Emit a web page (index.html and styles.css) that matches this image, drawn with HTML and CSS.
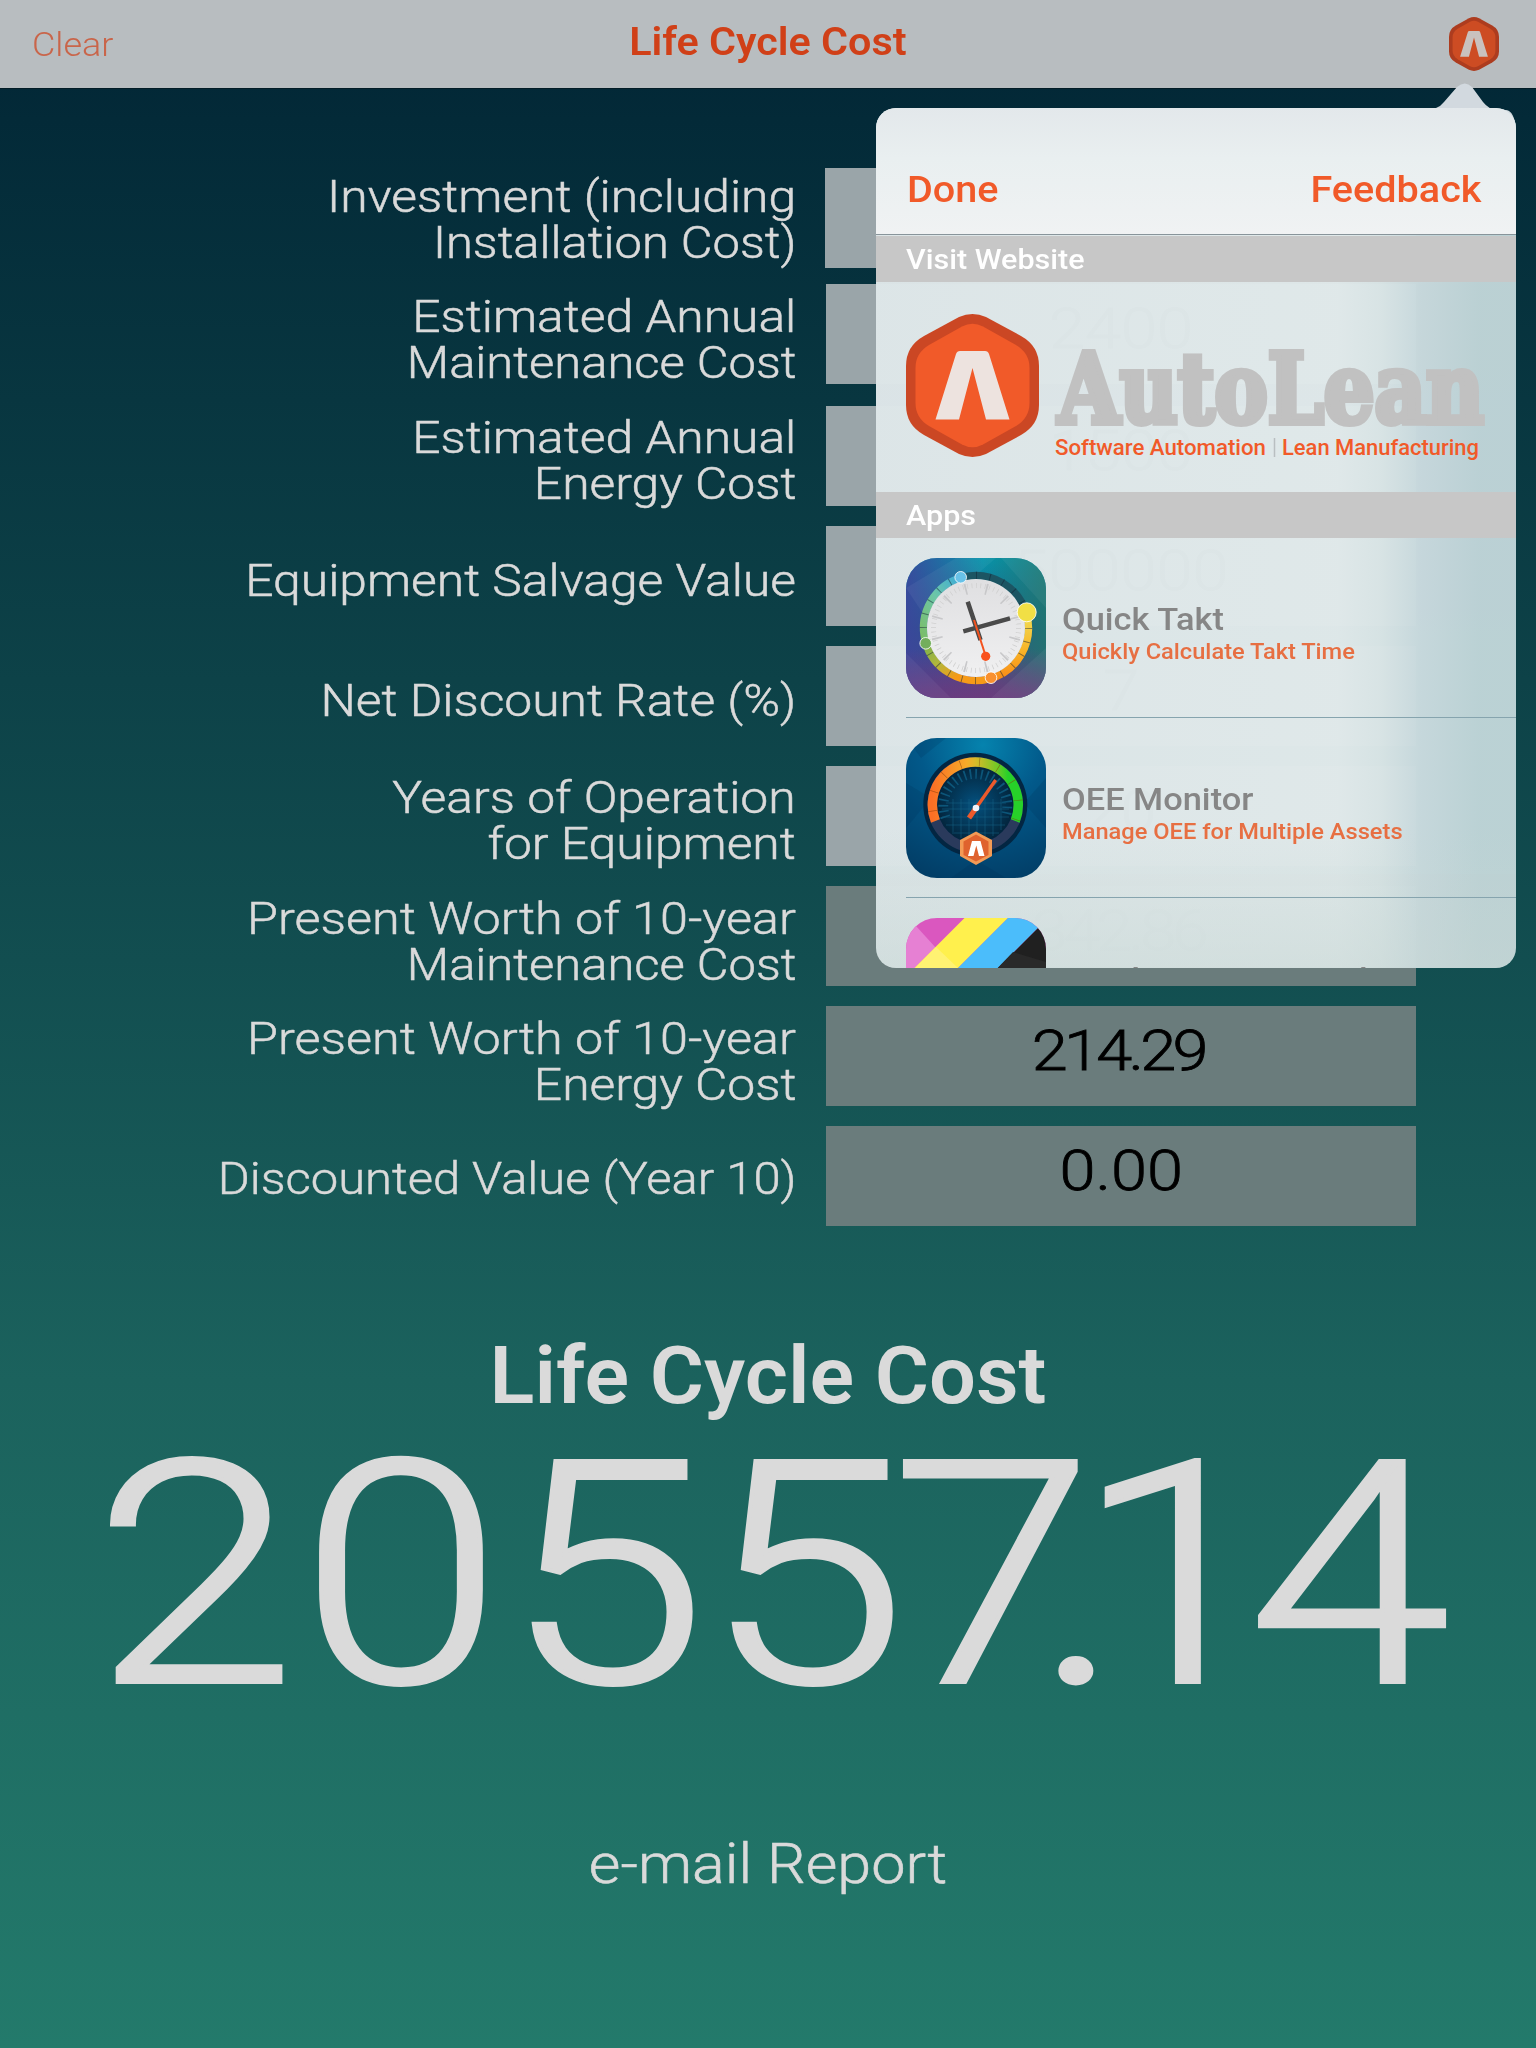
FILE: index.html
```html
<!DOCTYPE html>
<html lang="en">
<head>
<meta charset="utf-8">
<title>Life Cycle Cost</title>
<link rel="stylesheet" href="styles.css">
</head>
<body>
<svg class="defs" width="0" height="0" aria-hidden="true">
  <symbol id="badge" viewBox="0 0 133 143">
    <path class="badge-rim" d="M53 3Q66.500-3 80 3L115 22Q133 32 133 52V91Q133 111 115 121L80 140Q66.500 146 53 140L18 121Q0 111 0 91V52Q0 32 18 22Z"/>
    <path class="badge-face" d="M56 12.500Q66.500 7 77 12.500L110 31Q123.500 39 123.500 54V89Q123.500 104 110 112L77 130.500Q66.500 136 56 130.500L23 112Q9.500 104 9.500 89V54Q9.500 39 23 31Z"/>
    <path class="badge-mark" d="M54 37H79Q82 37 83 40L103.500 105.500H80L66.500 54L53 105.500H29.500L50 40Q51 37 54 37Z"/>
  </symbol>
</svg>

<div class="app">
  <header class="topbar">
    <a class="clear">Clear</a>
    <h1 class="title">Life Cycle Cost</h1>
    <svg class="menu-badge"><use href="#badge"/></svg>
  </header>

  <main class="content">
    <section class="form">
      <div class="row first"><p class="label"><span>Investment (including</span><span class="tight">Installation Cost)</span></p><div class="field"></div></div>
      <div class="row second"><p class="label"><span>Estimated Annual</span><span class="tight">Maintenance Cost</span></p><div class="field"><span>2400</span></div></div>
      <div class="row"><p class="label"><span>Estimated Annual</span><span>Energy Cost</span></p><div class="field"><span>1500</span></div></div>
      <div class="row"><p class="label"><span>Equipment Salvage Value</span></p><div class="field"><span>500000</span></div></div>
      <div class="row"><p class="label"><span>Net Discount Rate (%)</span></p><div class="field"><span>7</span></div></div>
      <div class="row"><p class="label"><span>Years of Operation</span><span>for Equipment</span></p><div class="field"><span>20</span></div></div>
      <div class="row result"><p class="label"><span class="loose">Present Worth of 10-year</span><span class="tight">Maintenance Cost</span></p><div class="field"><span class="narrow">342.86</span></div></div>
      <div class="row result"><p class="label"><span class="loose">Present Worth of 10-year</span><span>Energy Cost</span></p><div class="field"><span class="narrow">214.29</span></div></div>
      <div class="row result last"><p class="label"><span class="tight">Discounted Value (Year 10)</span></p><div class="field"><span>0.00</span></div></div>
    </section>
    <h2 class="total-title">Life Cycle Cost</h2>
    <svg class="total" viewBox="0 0 1536 312"><text transform="scale(1.17 1)" x="80 256.500 431 602 762 884.500 919 1067" y="256">20557.14</text></svg>
    <a class="email">e-mail Report</a>
  </main>

  <aside class="popover">
    <svg class="arrow" viewBox="0 0 96 60"><path d="M4 28Q18 28 24 20L37 5Q45-2 52 5L63 20Q69 27.500 76 27.500L86 28Q95 29 96 50V60H70L60 28Z"/></svg>
    <div class="panel">
      <div class="panel-bar"><a class="done">Done</a><a class="feedback">Feedback</a></div>
      <h3 class="section"><span>Visit Website</span></h3>
      <div class="brand">
        <svg class="brand-badge"><use href="#badge"/></svg>
        <svg class="wordmark" viewBox="0 0 434 122">
          <text class="word" x="3" y="87" textLength="426" lengthAdjust="spacingAndGlyphs">AutoLean</text>
          <text class="tag" x="0" y="119" textLength="211" lengthAdjust="spacingAndGlyphs">Software Automation</text>
          <path class="tag-rule" d="M219.500 102V121"/>
          <text class="tag" x="227" y="119" textLength="197" lengthAdjust="spacingAndGlyphs">Lean Manufacturing</text>
        </svg>
      </div>
      <h3 class="section apps"><span>Apps</span></h3>
      <ul class="apps-list">
        <li class="app-row">
          <svg class="icon" viewBox="0 0 140 140">
            <defs>
              <linearGradient id="tb" x1="0" y1="0" x2="0" y2="1"><stop offset="0" stop-color="#0794ab"/><stop offset=".5" stop-color="#205d88"/><stop offset="1" stop-color="#64417f"/></linearGradient>
              <linearGradient id="tl" x1="0" y1="0" x2="1" y2="0"><stop offset="0" stop-color="#3c459c" stop-opacity=".9"/><stop offset=".55" stop-color="#3c459c" stop-opacity="0"/></linearGradient>
              <linearGradient id="tr" x1="0" y1="0" x2="1" y2="0"><stop offset=".55" stop-color="#20766e" stop-opacity="0"/><stop offset="1" stop-color="#20766e" stop-opacity=".85"/></linearGradient>
              <linearGradient id="tp" x1="0" y1="0" x2="0" y2="1"><stop offset=".65" stop-color="#6b3a7d" stop-opacity="0"/><stop offset="1" stop-color="#6b3a7d" stop-opacity=".85"/></linearGradient>
              <linearGradient id="r1" x1="0" y1="0" x2="0" y2="1"><stop offset="0" stop-color="#f0dd55"/><stop offset=".6" stop-color="#f9b024"/><stop offset="1" stop-color="#f98b17"/></linearGradient>
              <linearGradient id="r2" x1="0" y1="0" x2="1" y2="1"><stop offset="0" stop-color="#73b350"/><stop offset=".4" stop-color="#b5b63a"/><stop offset=".7" stop-color="#f69a18"/></linearGradient>
              <linearGradient id="r3" x1="0" y1="1" x2="1" y2="0"><stop offset="0" stop-color="#7bbd68"/><stop offset=".5" stop-color="#6cc6a8"/><stop offset="1" stop-color="#38a9dd"/></linearGradient>
              <linearGradient id="face" x1="0" y1="0" x2="0" y2="1"><stop offset="0" stop-color="#dfdfe1"/><stop offset="1" stop-color="#f0f0f1"/></linearGradient>
            </defs>
            <path fill="url(#tb)" d="M0 0H140V140H0z"/><path fill="url(#tl)" d="M0 0H140V140H0z"/><path fill="url(#tr)" d="M0 0H140V140H0z"/><path fill="url(#tp)" d="M0 0H140V140H0z"/>
            <path fill="#fff" opacity=".05" d="M0 30L50 0H90L20 60zM85 140L140 90V140zM0 95L45 140H0zM95 0L140 50V0z"/>
            <g fill="none" stroke-width="7.500">
              <path stroke="#1c5563" d="M57 19.100A52.500 52.500 0 0 1 120.700 57"/>
              <path stroke="url(#r1)" d="M120.700 57A52.500 52.500 0 0 1 83 120.900"/>
              <path stroke="url(#r2)" d="M83 120.900A52.500 52.500 0 0 1 19.300 83"/>
              <path stroke="url(#r3)" d="M19.300 83A52.500 52.500 0 0 1 57 19.100"/>
              <circle cx="70" cy="70" r="52.500" stroke="#123" stroke-opacity=".5" pathLength="240" stroke-dasharray="0.700 9.300"/>
            </g>
            <circle cx="70" cy="70" r="49" fill="url(#face)"/>
            <circle cx="70" cy="70" r="42.500" fill="none" stroke="#cfcfcf" stroke-width="5" pathLength="720" stroke-dasharray="2 10"/>
            <circle cx="70" cy="70" r="40" fill="none" stroke="#c8c8ca" stroke-width="11" pathLength="360" stroke-dasharray="2.500 27.500" transform="rotate(14 70 70)"/>
            <g fill="none"><path stroke="#4a4a4a" stroke-width="4.500" d="M57.300 73.300L104 60.300M61.700 43.700L74.500 82"/><path stroke="#f4521e" stroke-width="2" d="M68 62L79.700 98"/></g>
            <circle cx="79.700" cy="98.300" r="4.600" fill="#f9511d"/>
            <g stroke="#fff" stroke-opacity=".85" stroke-width="1"><circle cx="54.700" cy="19.300" r="5.800" fill="#68c2e8"/><circle cx="120.700" cy="54.300" r="9.500" fill="#f1df45"/><circle cx="85" cy="119.700" r="5.800" fill="#f9902f"/><circle cx="19.700" cy="85.300" r="5.800" fill="#73ae5d"/></g>
          </svg>
          <div class="app-text"><strong>Quick Takt</strong><em>Quickly Calculate Takt Time</em></div>
        </li>
        <li class="app-row">
          <svg class="icon" viewBox="0 0 140 140">
            <defs>
              <radialGradient id="ob" cx=".55" cy=".05" r="1"><stop offset="0" stop-color="#0583ae"/><stop offset=".45" stop-color="#02598a"/><stop offset="1" stop-color="#023e67"/></radialGradient>
              <radialGradient id="og"><stop offset="0" stop-color="#04517f"/><stop offset="1" stop-color="#03263e"/></radialGradient>
              <linearGradient id="arc" x1="0" y1="0" x2="1" y2="0"><stop offset="0" stop-color="#fb6f25"/><stop offset=".4" stop-color="#f7ab29"/><stop offset=".5" stop-color="#dab929"/><stop offset=".75" stop-color="#74c926"/><stop offset=".88" stop-color="#27d129"/></linearGradient>
            </defs>
            <path fill="url(#ob)" d="M0 0H140V140H0z"/>
            <path fill="#012f55" opacity=".18" d="M0 45L25 60L0 90zM140 40L118 65L140 90zM70 122L100 140H45zM40 0L15 20L0 0z"/>
            <circle cx="69.300" cy="66.700" r="52" fill="#032642"/>
            <circle cx="69.300" cy="66.700" r="37.500" fill="url(#og)"/>
            <path stroke="#14658a" stroke-opacity=".5" d="M40 65H100M36 71H103M36 79H103M40 87H99M46 95H93M47 61V94M55 61V100M63 61V102M71 61V102M79 61V102M87 61V98M95 61V92"/>
            <path fill="none" stroke="#0c5579" stroke-width="10" pathLength="220" stroke-dasharray="3 7" d="M39.500 79.500A32 32 0 1 1 99.100 79.500"/>
            <circle cx="69.300" cy="66.700" r="43" fill="none" stroke="#2a3a5c" stroke-width="9.500"/>
            <path fill="none" stroke="url(#arc)" stroke-width="9.500" d="M29.400 83A43 43 0 1 1 109.200 83"/>
            <path fill="none" stroke="#853d08" stroke-opacity=".6" stroke-width="9" pathLength="100" stroke-dasharray=".4 11.200" stroke-dashoffset="-6" d="M29.400 83A43 43 0 1 1 109.200 83"/>
            <path stroke="#ed5a2c" stroke-width="3.400" d="M70 70L89.700 42"/><path stroke="#ed5a2c" stroke-width="5" d="M63 80L70 70"/>
            <circle cx="70" cy="70" r="3.300" fill="#eef2fa"/>
            <path fill="#f39a55" d="M70 93.500L86 102V118L70 127L54 118V102Z"/><path fill="#df622e" d="M70 96.500L82.500 103.500V117L70 123.500L57.500 117V103.500Z"/>
            <path fill="#fff" d="M66 103H74.500L78.500 118H73L70.300 107.500L67.500 118H62Z"/>
          </svg>
          <div class="app-text"><strong>OEE Monitor</strong><em>Manage OEE for Multiple Assets</em></div>
        </li>
        <li class="app-row">
          <svg class="icon" viewBox="0 0 140 140"><path fill="#da57bf" d="M0 0H140V140H0z"/><path fill="#e680d3" d="M10 8L30 30L9 50H0V8z"/><path fill="#fff04d" d="M58.500 0H102L-38 140H-81.500z"/><path fill="#fff272" d="M30 29L52 50H9z"/><path fill="#4bbdfb" d="M102 0H142L2 140H-38z"/><path fill="#202020" d="M142 0V140H2z"/><path fill="#292929" d="M107 34L140 44V60H82z"/></svg>
          <div class="app-text"><strong>Quick Section Weights</strong></div>
        </li>
      </ul>
    </div>
  </aside>
</div>
</body>
</html>
```
FILE: styles.css
```css
* { box-sizing: border-box; margin: 0; padding: 0; }
body { width: 1536px; height: 2048px; overflow: hidden; font-family: Roboto, "Liberation Sans", sans-serif; font-weight: 300; }
.defs { position: absolute; }
.app { position: relative; height: 2048px; background: linear-gradient(#022434 0, #032a38 120px, #124e50 960px, #1b625d 1380px, #237a6b 2048px); color: #dadada; display: flex; flex-direction: column; }

.topbar { height: 89px; flex: none; background: #b8bdc0; border-bottom: 1px solid #031c26; display: grid; grid-template-columns: 1fr auto 1fr; padding: 0 37px; }
.clear { margin-left: -5px; font-size: 33px; line-height: 89px; color: #c9654a; transform: scaleX(1.09); transform-origin: left; }
.title { font-size: 39px; line-height: 84px; font-weight: 600; color: #d04018; transform: scaleX(1.06); }
.menu-badge { width: 50px; height: 54px; margin-top: 17px; justify-self: end; filter: brightness(.85); }
.badge-rim { fill: #cb4724; }
.badge-face { fill: #f15a29; }
.badge-mark { fill: #ede3df; }

.content { flex: 1; display: flex; flex-direction: column; }
.form { padding-top: 79px; display: flex; flex-direction: column; }
.row { height: 120px; display: grid; grid-template-columns: 796px 590px; column-gap: 30px; align-items: start; }
.row.first { height: 116px; grid-template-columns: 796px 591px; column-gap: 29px; }
.row.second { height: 122px; }
.label { height: 92px; margin-top: 9px; display: flex; flex-direction: column; justify-content: center; align-items: flex-end; font-size: 45px; line-height: 46px; white-space: nowrap; -webkit-text-stroke: .5px #dadada; }
.label span { transform: scaleX(1.106); transform-origin: right; }
.label .tight { transform: scaleX(1.087); }
.label .loose { transform: scaleX(1.118); }
.first .label { margin-top: 6px; }
.second .label, .result .label { margin-top: 10px; }
.last .label { margin-top: 7px; }
.field { height: 100px; background: #9aa5a9; color: #000; text-align: center; font-size: 55px; line-height: 90px; -webkit-text-stroke: .8px #000; }
.field span { display: inline-block; transform: scaleX(1.18); }
.field .narrow { letter-spacing: -3.200px; margin-left: -5px; }
.result .field { background: #6a7c7c; }
.total-title { margin-top: 80px; text-align: center; font-size: 79px; line-height: 100px; font-weight: 600; transform: scaleX(1.05); }
.total { width: 1536px; height: 312px; flex: none; }
.total text { font-size: 311px; fill: #dadada; stroke: #dadada; stroke-width: 4px; }
.email { margin-top: 91px; text-align: center; font-size: 56px; line-height: 70px; transform: scaleX(1.09); -webkit-text-stroke: .6px #dadada; }

.popover { position: absolute; left: 876px; top: 108px; width: 640px; height: 860px; }
.arrow { position: absolute; left: 544px; top: -26px; width: 96px; height: 60px; fill: #d2d9df; }
.panel { position: relative; height: 860px; overflow: hidden; border-radius: 20px; display: flex; flex-direction: column; background: linear-gradient(#cfdcda00 720px, #c6d6d380 860px), linear-gradient(90deg, #dde6e8fc 0, #e0e9eafc 72%, #d8e4e5fc 79%, #c8d9ddfc 85%, #bdd3d6fc 94%); }
.panel-bar { height: 127px; flex: none; margin-bottom: 1px; border-bottom: 1px solid #88949a; background: linear-gradient(#e3e8eb, #e9eff0 40%, #f0f2f3); display: flex; justify-content: space-between; padding: 52px 34px 0 31px; font-size: 36px; line-height: 60px; font-weight: 500; color: #f15a29; }
.done { transform: scaleX(1.1); transform-origin: left; }
.feedback { transform: scaleX(1.1); transform-origin: right; }
.section { height: 46px; flex: none; padding-left: 30px; background: #c7c7c7; color: #fff; font-size: 28px; line-height: 47px; font-weight: 500; }
.section span { display: inline-block; transform: scaleX(1.09); transform-origin: left; }
.brand { height: 210px; flex: none; display: flex; padding: 32px 0 0 30px; gap: 16px; }
.brand-badge { width: 133px; height: 143px; }
.wordmark { width: 434px; height: 122px; margin-top: 22px; overflow: visible; }
.word { font: bold 97px "DejaVu Serif Condensed", "DejaVu Serif", serif; fill: #c1c1c1; stroke: #c1c1c1; stroke-width: 6px; }
.tag { font-size: 22px; font-weight: 500; fill: #f15a29; }
.tag-rule { stroke: #b9bfc1; stroke-width: 1.500px; }
.apps-list { list-style: none; padding-left: 30px; }
.app-row { height: 180px; padding-top: 20px; border-bottom: 1px solid #86a4ae; display: flex; gap: 16px; }
.icon { width: 140px; height: 140px; border-radius: 31px; flex: none; }
.app-text { display: flex; flex-direction: column; padding-top: 42px; white-space: nowrap; transform: scaleX(1.075); transform-origin: left; }
.app-text strong { font-size: 32px; line-height: 38px; font-weight: 500; color: #868686; }
.app-text em { font-style: normal; font-size: 22px; line-height: 28px; font-weight: 500; color: #e76f42; }
```
